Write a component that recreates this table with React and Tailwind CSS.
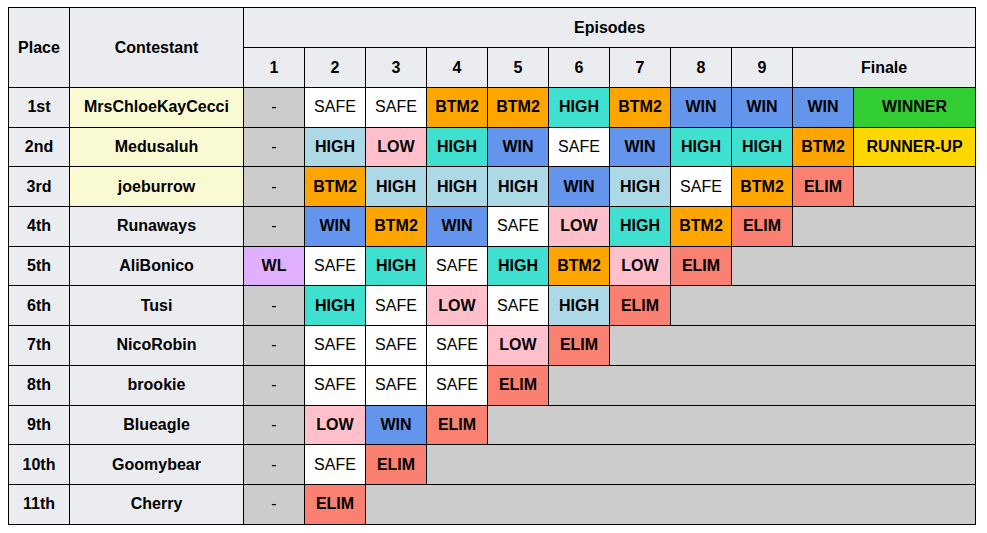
import React from 'react'

const styles = {
  SAFE: 'bg-white font-normal',
  H: 'bg-[#add8e6] font-bold',
  T: 'bg-[#40e0d0] font-bold',
  LOW: 'bg-[#ffc0cb] font-bold',
  BTM2: 'bg-[#ffa500] font-bold',
  WIN: 'bg-[#6495ed] font-bold',
  ELIM: 'bg-[#fa8072] font-bold',
  WINNER: 'bg-[#32cd32] font-bold',
  'RUNNER-UP': 'bg-[#ffd700] font-bold',
  WL: 'bg-[#e0b0ff] font-bold',
  '-': 'bg-[#cccccc] font-normal',
}

// T = turquoise "HIGH", H = light blue "HIGH"
const rows = [
  ['1st', 'MrsChloeKayCecci', true, ['-', 'SAFE', 'SAFE', 'BTM2', 'BTM2', 'T', 'BTM2', 'WIN', 'WIN', 'WIN', 'WINNER']],
  ['2nd', 'Medusaluh', true, ['-', 'H', 'LOW', 'T', 'WIN', 'SAFE', 'WIN', 'T', 'T', 'BTM2', 'RUNNER-UP']],
  ['3rd', 'joeburrow', true, ['-', 'BTM2', 'H', 'H', 'H', 'WIN', 'H', 'SAFE', 'BTM2', 'ELIM']],
  ['4th', 'Runaways', false, ['-', 'WIN', 'BTM2', 'WIN', 'SAFE', 'LOW', 'T', 'BTM2', 'ELIM']],
  ['5th', 'AliBonico', false, ['WL', 'SAFE', 'T', 'SAFE', 'T', 'BTM2', 'LOW', 'ELIM']],
  ['6th', 'Tusi', false, ['-', 'T', 'SAFE', 'LOW', 'SAFE', 'H', 'ELIM']],
  ['7th', 'NicoRobin', false, ['-', 'SAFE', 'SAFE', 'SAFE', 'LOW', 'ELIM']],
  ['8th', 'brookie', false, ['-', 'SAFE', 'SAFE', 'SAFE', 'ELIM']],
  ['9th', 'Blueagle', false, ['-', 'LOW', 'WIN', 'ELIM']],
  ['10th', 'Goomybear', false, ['-', 'SAFE', 'ELIM']],
  ['11th', 'Cherry', false, ['-', 'ELIM']],
]

const Cell = ({ value }) => {
  const label = value === 'T' || value === 'H' ? 'HIGH' : value
  return (
    <td className={`border border-black text-center p-0 ${styles[value]}`}>
      {label}
    </td>
  )
}

const App = () => {
  return (
    <div className="bg-white w-[987px] h-[533px] pt-[7px] pl-[8px] font-['Liberation_Sans',Arial,sans-serif] text-[16px] text-black">
      <table className="border-collapse table-fixed w-[968px] border border-black">
        <colgroup>
          <col className="w-[61px]" />
          <col className="w-[174px]" />
          {[...Array(10)].map((_, i) => (
            <col key={i} className="w-[61px]" />
          ))}
          <col className="w-[122px]" />
        </colgroup>
        <thead>
          <tr className="h-[40px] bg-[#eaecf0] font-bold">
            <th rowSpan={2} className="border border-black p-0">Place</th>
            <th rowSpan={2} className="border border-black p-0">Contestant</th>
            <th colSpan={11} className="border border-black p-0">Episodes</th>
          </tr>
          <tr className="h-[40px] bg-[#eaecf0] font-bold">
            {[1, 2, 3, 4, 5, 6, 7, 8, 9].map((n) => (
              <th key={n} className="border border-black p-0">{n}</th>
            ))}
            <th colSpan={2} className="border border-black p-0">Finale</th>
          </tr>
        </thead>
        <tbody>
          {rows.map(([place, name, top, results]) => (
            <tr key={place} className="h-[39.7px]">
              <td className="border border-black bg-[#eaecf0] font-bold text-center p-0">{place}</td>
              <td className={`border border-black font-bold text-center p-0 ${top ? 'bg-[#fafad2]' : 'bg-[#eaecf0]'}`}>{name}</td>
              {results.map((r, i) => (
                <Cell key={i} value={r} />
              ))}
              {results.length < 11 && (
                <td colSpan={11 - results.length} className="border border-black bg-[#cccccc] p-0"></td>
              )}
            </tr>
          ))}
        </tbody>
      </table>
    </div>
  )
}

export default App
